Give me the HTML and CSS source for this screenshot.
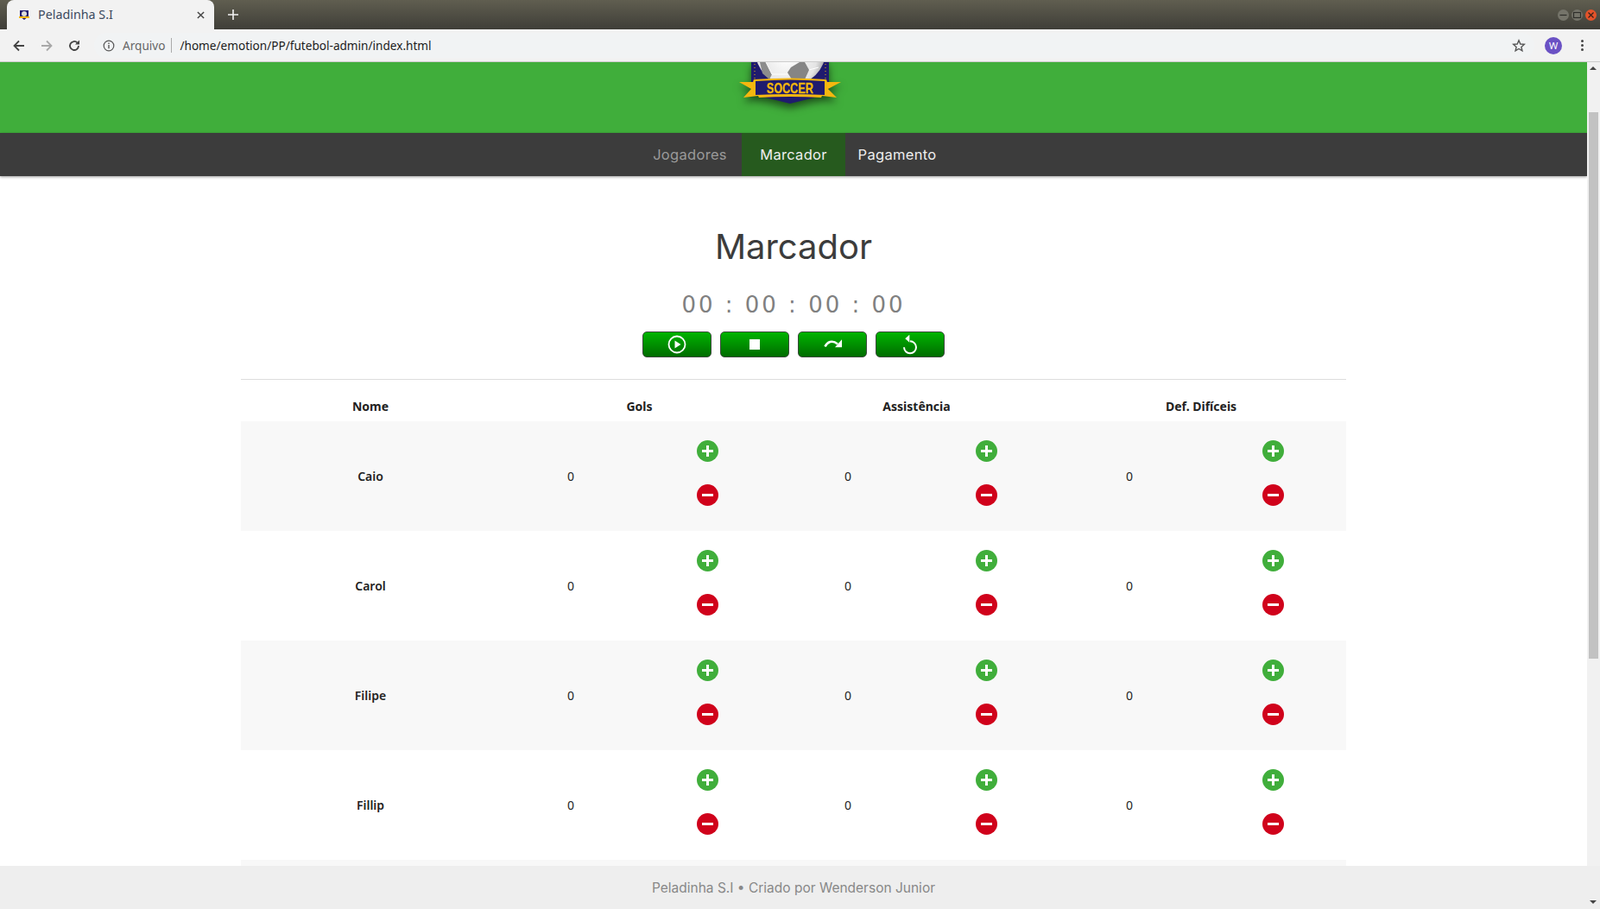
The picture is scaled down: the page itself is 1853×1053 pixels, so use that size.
FILE: index.html
```html
<!DOCTYPE html>
<html lang="pt-BR">
<head>
    <meta charset="UTF-8">
    <title>Peladinha S.I</title>
    <link rel="stylesheet" href="styles.css">
</head>
<body>
    <div class="tabstrip">
        <div class="tab">
            <svg class="favicon" viewBox="0 0 12 12"><path d="M1 1h10v7l-5 4-5-4z" fill="#1f1b6e"/><circle cx="6" cy="5" r="3" fill="#ddd"/><rect x="0" y="8" width="12" height="2" fill="#f5b70f"/></svg>
            <span class="tab-title">Peladinha S.I</span>
            <svg class="tab-close" viewBox="0 0 10 10"><path d="M1 1l8 8M9 1l-8 8" stroke="#444" stroke-width="1.6"/></svg>
        </div>
        <svg class="newtab" viewBox="0 0 12 12"><path d="M6 0v12M0 6h12" stroke="#f2f2f2" stroke-width="1.6"/></svg>
        <div class="winbtns">
            <span class="winbtn"><svg viewBox="0 0 13 13"><path d="M2.5 6.5h8" stroke="#2e2e2a" stroke-width="1.2"/></svg></span>
            <span class="winbtn"><svg viewBox="0 0 13 13"><rect x="2.5" y="3.5" width="8" height="6" fill="none" stroke="#2e2e2a" stroke-width="1.2"/></svg></span>
            <span class="winbtn winbtn-close"><svg viewBox="0 0 13 13"><path d="M3.5 3.5l6 6M9.5 3.5l-6 6" stroke="#3a2018" stroke-width="1.2"/></svg></span>
        </div>
    </div>
    <div class="toolbar">
        <svg class="navicon" viewBox="0 0 16 16"><path d="M14 8H3M8 2.500 2.500 8 8 13.500" fill="none" stroke="#444" stroke-width="1.800"/></svg>
        <svg class="navicon" viewBox="0 0 16 16"><path d="M2 8h11M8 2.500 13.500 8 8 13.500" fill="none" stroke="#a8a8a8" stroke-width="1.800"/></svg>
        <svg class="navicon" viewBox="0 0 16 16"><path d="M13 8a5 5 0 1 1-1.500-3.600" fill="none" stroke="#444" stroke-width="1.800"/><path d="M14 1.500V6.500H9z" fill="#444"/></svg>
        <div class="omnibox">
            <svg class="info" viewBox="0 0 14 14"><circle cx="7" cy="7" r="5.800" fill="none" stroke="#555" stroke-width="1.200"/><path d="M7 6v4.200M7 3.600v1.300" stroke="#555" stroke-width="1.400"/></svg>
            <span class="scheme">Arquivo</span>
            <span class="url">/home/emotion/PP/futebol-admin/index.html</span>
            <svg class="star" viewBox="0 0 16 16"><path d="M8 1.800l1.800 4.200 4.500.4-3.400 3 1 4.400L8 11.500l-3.900 2.300 1-4.400-3.400-3 4.500-.4z" fill="none" stroke="#555" stroke-width="1.400"/></svg>
        </div>
        <span class="avatar">W</span>
        <span class="menu-dots"><i></i><i></i><i></i></span>
    </div>

    <div class="viewport">
        <div class="page">
            <header class="banner">
                <svg class="logo" viewBox="0 0 118 60">
                    <defs>
                        <radialGradient id="ballfill" cx="0.45" cy="0.6" r="0.6">
                            <stop offset="0" stop-color="#fff"/>
                            <stop offset="0.7" stop-color="#e4e4e4"/>
                            <stop offset="1" stop-color="#8c8c8c"/>
                        </radialGradient>
                    </defs>
                    <path d="M14 0V37L59 48 104 37V0z" fill="#1f1b6e"/>
                    <path d="M18 2V20M100 2V20" stroke="#f5b70f" stroke-width="1" stroke-dasharray="1 3"/>
                    <circle cx="59.500" cy="-14" r="41" fill="url(#ballfill)"/>
                    <path d="M60 6L70 0H76L81 9 76 20H61L56 12z" fill="#858585"/>
                    <path d="M24 0H31L38 14 35 20 27 13z" fill="#8c8c8c"/>
                    <path d="M31 0L38 14H56M81 9L92 6M76 20L78 24M35 20L40 26" stroke="#fff" stroke-width="1" fill="none"/>
                    <path d="M0 23H16L17 20Q59 17 101 20L102 23H118L103 31 113 41 96 39 95 41Q59 39 23 41L22 39 5 41 14 31z" fill="#f5b70f"/>
                    <path d="M19 22Q59 19 99 22V38Q59 36 19 38z" fill="#1f1b6e"/>
                    <text class="logo-text" x="59" y="36" text-anchor="middle" textLength="54" lengthAdjust="spacingAndGlyphs">SOCCER</text>
                </svg>
            </header>
            <nav class="mainnav">
                <a class="navitem navitem-dim" href="#">Jogadores</a>
                <a class="navitem navitem-active" href="#">Marcador</a>
                <a class="navitem" href="#">Pagamento</a>
            </nav>

            <main class="content">
                <h1 class="title">Marcador</h1>
                <div class="timer">00 : 00 : 00 : 00</div>
                <div class="controls">
                    <button class="ctrl" type="button"><svg viewBox="0 0 24 24"><circle cx="12" cy="12" r="9.500" fill="none" stroke="#fff" stroke-width="1.800"/><path d="M9.500 7.500l7 4.500-7 4.500z" fill="#fff"/></svg></button>
                    <button class="ctrl" type="button"><svg viewBox="0 0 24 24"><rect x="6" y="6" width="12" height="12" fill="#fff"/></svg></button>
                    <button class="ctrl" type="button"><svg viewBox="0 0 24 24"><path d="M3.500 14.500C6 9 12 6.500 18 11.500" fill="none" stroke="#fff" stroke-width="2.600"/><path d="M23 6.300v9H15z" fill="#fff"/></svg></button>
                    <button class="ctrl" type="button"><svg viewBox="0 0 24 24"><path d="M12 8.300a7 7 0 1 1-7 7" fill="none" stroke="#fff" stroke-width="2"/><path d="M11.300.7v9L6.300 5.300z" fill="#fff"/></svg></button>
                </div>
                <hr class="divider">
                <table class="scores">
                    <colgroup>
                        <col class="col-name">
                        <col class="col-a"><col class="col-b">
                        <col class="col-c"><col class="col-b">
                        <col class="col-d"><col class="col-d">
                    </colgroup>
                    <thead>
                        <tr>
                            <th class="player">Nome</th>
                            <th colspan="2">Gols</th>
                            <th colspan="2">Assistência</th>
                            <th colspan="2">Def. Difíceis</th>
                        </tr>
                    </thead>
                    <tbody id="rows"></tbody>
                </table>
            </main>
        </div>
        <div class="scrollbar">
            <span class="arrow-up"></span>
            <span class="thumb"></span>
        </div>
    </div>

    <footer class="footer">
        <span>Peladinha S.I • Criado por Wenderson Junior</span>
        <span class="arrow-down"></span>
    </footer>

    <script src="app.js"></script>
</body>
</html>
```

FILE: styles.css
```css
html, body {
    height: 100%;
}
body {
    margin: 0;
    display: flex;
    flex-direction: column;
    overflow: hidden;
    font-family: "Noto Sans", sans-serif;
    background: #fff;
    color: #222;
}

/* browser window */
.tabstrip {
    height: 34px;
    flex: none;
    display: flex;
    align-items: flex-end;
    padding-left: 8px;
    background: linear-gradient(#605e50, #3f3e38);
}
.tab {
    width: 240px;
    height: 34px;
    box-sizing: border-box;
    display: flex;
    align-items: center;
    padding: 0 11px 0 14px;
    background: #f2f2f2;
    border-radius: 8px 8px 0 0;
}
.favicon {
    width: 12px;
    height: 12px;
}
.tab-title {
    margin: 0 0 2px 10px;
    flex: 1;
    font-size: 14.300px;
    color: #3c4a5e;
}
.tab-close {
    width: 9px;
    height: 9px;
}
.newtab {
    width: 12px;
    height: 12px;
    margin: 0 0 11px 16px;
}
.winbtns {
    margin-left: auto;
    display: flex;
    gap: 3px;
    padding: 0 4px 10px 0;
}
.winbtn {
    width: 13px;
    height: 13px;
    border-radius: 50%;
    background: #75746a;
}
.winbtn svg {
    display: block;
}
.winbtn-close {
    background: #e4532a;
}
.toolbar {
    height: 37px;
    flex: none;
    display: flex;
    align-items: center;
    padding-left: 14px;
    background: #f2f2f2;
    border-bottom: 1px solid #ccc;
}
.navicon {
    width: 16px;
    height: 16px;
    margin-right: 16px;
}
.omnibox {
    width: 1668px;
    height: 29px;
    box-sizing: border-box;
    margin-left: -1px;
    display: flex;
    align-items: center;
    padding: 0 10px 0 10px;
    background: #f1f3f4;
    border-radius: 15px;
    font-size: 13.600px;
}
.info {
    width: 14px;
    height: 14px;
}
.scheme {
    margin-left: 9px;
    padding-right: 7px;
    border-right: 1px solid #aaa;
    line-height: 17px;
    color: #666;
}
.url {
    margin-left: 9px;
    flex: 1;
    color: #1c1c1c;
}
.star {
    width: 16px;
    height: 16px;
}
.avatar {
    width: 20px;
    height: 20px;
    margin-left: 12px;
    border-radius: 50%;
    background: #6a51c4;
    color: #fff;
    font-size: 11px;
    line-height: 20px;
    text-align: center;
}
.menu-dots {
    margin-left: 22px;
    display: flex;
    flex-direction: column;
    gap: 2px;
}
.menu-dots i {
    width: 3px;
    height: 3px;
    border-radius: 50%;
    background: #444;
}

/* page */
.viewport {
    flex: 1;
    min-height: 0;
    display: flex;
}
.page {
    flex: 1;
    min-width: 0;
    overflow: hidden;
}
.banner {
    height: 82px;
    overflow: hidden;
    display: flex;
    justify-content: center;
    background: #40ae3b;
}
.logo {
    width: 118px;
    height: 60px;
    margin-left: -9px;
    overflow: visible;
    filter: drop-shadow(0 5px 5px rgba(0, 0, 0, 0.55));
}
.logo-text {
    font-family: "Liberation Sans", sans-serif;
    font-weight: bold;
    font-size: 17px;
    fill: #f5b70f;
    stroke: #f5b70f;
    stroke-width: 0.4px;
}
.mainnav {
    height: 50px;
    display: flex;
    justify-content: center;
    background: #3c3c3c;
    box-shadow: 0 1px 3px rgba(0, 0, 0, 0.4);
    position: relative;
}
.navitem {
    width: 120px;
    line-height: 50px;
    text-align: center;
    text-decoration: none;
    font-family: Inter, sans-serif;
    font-size: 16.500px;
    letter-spacing: 0.3px;
    color: #eee;
}
.navitem-dim {
    color: #9a9a9a;
}
.navitem-active {
    background: #265a1e;
}
.content {
    width: 1280px;
    margin: 0 auto;
}
.title {
    margin: 54px 0 0;
    text-align: center;
    font-family: Inter, sans-serif;
    font-weight: 400;
    font-size: 40px;
    line-height: 56px;
    color: #3c3c3c;
}
.timer {
    margin-top: 23px;
    text-align: center;
    font-family: "DejaVu Sans", sans-serif;
    font-size: 26px;
    line-height: 32px;
    letter-spacing: 3px;
    color: #808080;
}
.controls {
    margin-top: 15px;
    display: flex;
    justify-content: center;
    gap: 10px;
}
.ctrl {
    width: 80px;
    height: 30px;
    padding: 0;
    display: flex;
    align-items: center;
    justify-content: center;
    border: 1px solid #3c4a3c;
    border-radius: 5px;
    background: linear-gradient(#00b400, #006c00);
}
.ctrl svg {
    width: 24px;
    height: 24px;
}
.divider {
    margin: 25px 0 0;
    border: 0;
    border-top: 1px solid #ddd;
}
.scores {
    width: 1280px;
    table-layout: fixed;
    border-collapse: collapse;
    font-size: 14px;
}
.col-name { width: 302px; }
.col-a { width: 158px; }
.col-b { width: 161px; }
.col-c { width: 162px; }
.col-d { width: 168px; }
.scores th {
    height: 48px;
    padding: 13px 0 0;
    box-sizing: border-box;
    font-weight: 700;
    color: #222;
}
.scores td {
    height: 127px;
    padding: 0 0 0 2px;
    box-sizing: border-box;
    text-align: center;
}
.scores .player {
    padding-left: 0;
    padding-right: 2px;
}
.scores td.player {
    font-weight: 600;
}
.scores td:last-child {
    padding: 0 2px 0 0;
}
.scores tbody tr:nth-child(odd) {
    background: #f8f8f8;
}
.steppers {
    margin: -7px 0 0 -2px;
    display: flex;
    flex-direction: column;
    align-items: center;
    gap: 26px;
}
.scores td:last-child .steppers {
    margin-left: 0;
}
.step {
    width: 25px;
    height: 25px;
    display: block;
}

.scrollbar {
    width: 15px;
    flex: none;
    position: relative;
    background: #f1f1f1;
}
.thumb {
    position: absolute;
    left: 2px;
    right: 2px;
    top: 58px;
    height: 633px;
    background: #c2c2c2;
}
.arrow-up {
    position: absolute;
    left: 3px;
    top: 5px;
    border: 4px solid transparent;
    border-top: 0;
    border-bottom: 4px solid #444;
}
.footer {
    height: 50px;
    flex: none;
    display: flex;
    align-items: center;
    justify-content: center;
    padding-right: 15px;
    position: relative;
    background: #eee;
    font-family: Inter, sans-serif;
    font-size: 15.500px;
    color: #888;
}
.arrow-down {
    position: absolute;
    right: 4px;
    bottom: 6px;
    border: 4px solid transparent;
    border-bottom: 0;
    border-top: 4px solid #444;
}
```

FILE: app.js
```js
var jogadores = ["Caio", "Carol", "Filipe", "Fillip", ""];

var plus = '<svg class="step" viewBox="0 0 25 25"><circle cx="12.5" cy="12.5" r="12.5" fill="#40ae3b"/><path d="M12.500 6v13M6 12.500h13" stroke="#fff" stroke-width="3"/></svg>';
var minus = '<svg class="step" viewBox="0 0 25 25"><circle cx="12.5" cy="12.5" r="12.5" fill="#d0021b"/><path d="M6 12.500h13" stroke="#fff" stroke-width="3"/></svg>';

function contador() {
    return '<td>0</td><td><div class="steppers">' + plus + minus + '</div></td>';
}

var html = "";
jogadores.forEach(function (nome) {
    if (nome) {
        html += '<tr><td class="player">' + nome + '</td>' + contador() + contador() + contador() + '</tr>';
    } else {
        html += '<tr><td colspan="7"></td></tr>';
    }
});
document.getElementById("rows").innerHTML = html;
```
